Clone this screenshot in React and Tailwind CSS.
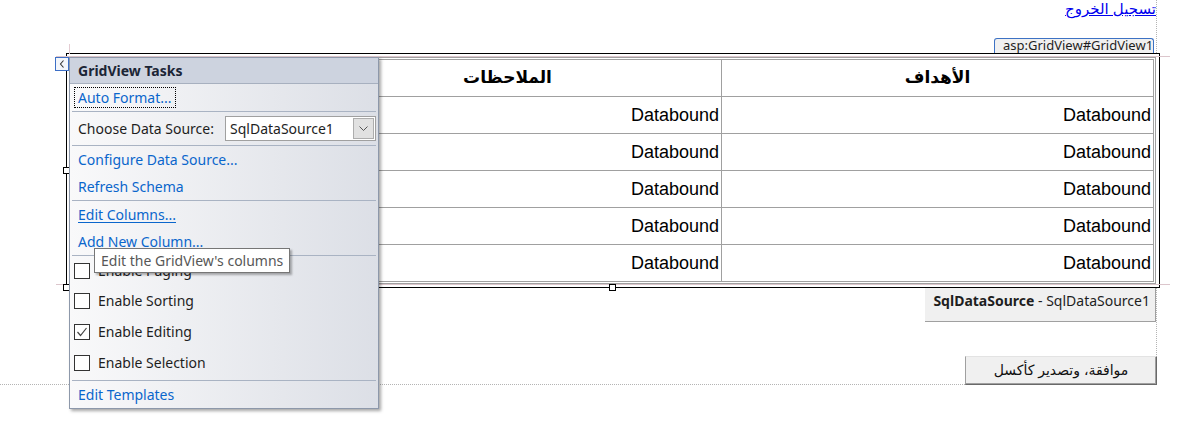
import React from "react";

const ui = "font-['Noto_Sans',sans-serif]";
const arial = "font-['Liberation_Sans','DejaVu_Sans',sans-serif]";

const Sep = () => <div className="mx-[2px] h-px shrink-0 bg-[#a9b3c3]" />;

const CheckRow = ({ label, checked, h = "h-[31px]" }) => (
  <div className={`${h} shrink-0 flex items-center pl-[4px] gap-[8px]`}>
    <div className="w-[16px] h-[16px] border border-[#333] bg-white flex items-center justify-center">
      {checked && (
        <svg width="12" height="12" viewBox="0 0 12 12">
          <polyline points="1.5,6 4.5,9.5 10.5,2" fill="none" stroke="#444" strokeWidth="1.2" />
        </svg>
      )}
    </div>
    <span className="text-[#1e1e1e]">{label}</span>
  </div>
);

const LinkRow = ({ label, underline }) => (
  <div className="h-[27px] shrink-0 flex items-center pl-[8px]">
    <span className={`text-[#0a66cc] ${underline ? "underline underline-offset-2" : ""}`}>{label}</span>
  </div>
);

const rows = [1, 2, 3, 4, 5];

const App = () => {
  return (
    <div className={`relative w-[1190px] h-[441px] overflow-hidden bg-white ${ui}`}>
      <div className="w-[1157px] h-[385px] border-r border-b border-dotted border-[#b4b4b4] flex flex-col">
        {/* logout */}
        <div className="h-[18px] shrink-0 flex justify-end">
          <a dir="rtl" className={`text-[15px] leading-[18px] text-[#0000ee] underline ${arial}`}>
            تسجيل الخروج
          </a>
        </div>

        {/* control badge */}
        <div className="mt-[20px] mr-[2px] self-end w-[160px] h-[15px] shrink-0 rounded-t-[3px] border border-b-0 border-[#3d72c4] bg-[#f0f0f0] text-[13px] leading-[13px] text-[#1e1e1e] pl-[8px]">
          asp:GridView#GridView1
        </div>

        {/* grid view */}
        <div className="ml-[66px] w-[1094px] h-[235px] shrink-0 border border-black bg-white p-[3px]">
          <div className="h-full border border-[#a0a0a0] p-px">
            <div className={`border-t border-l border-r border-[#a0a0a0] ${arial} text-black`}>
              <div className="flex h-[37px] border-b border-[#a0a0a0]">
                <div className="w-[221px] border-r border-[#a0a0a0]" />
                <div dir="rtl" className="w-[428px] border-r border-[#a0a0a0] flex items-center justify-center font-bold text-[17px]">
                  الملاحظات
                </div>
                <div dir="rtl" className="flex-1 flex items-center justify-center font-bold text-[17px]">
                  الأهداف
                </div>
              </div>
              {rows.map((r) => (
                <div key={r} className="flex h-[37px] border-b border-[#a0a0a0] text-[18px]">
                  <div className="w-[221px] border-r border-[#a0a0a0] flex items-center justify-end pr-[2px]">Databound</div>
                  <div className="w-[428px] border-r border-[#a0a0a0] flex items-center justify-end pr-[2px]">Databound</div>
                  <div className="flex-1 flex items-center justify-end pr-[2px]">Databound</div>
                </div>
              ))}
            </div>
          </div>
        </div>

        {/* data source control */}
        <div className="self-end w-[231px] h-[34px] shrink-0 border-r border-b border-[#a0a0a0] bg-[#f0f0f0] flex items-center justify-end pr-[5px] pb-[8px] text-[14px] text-[#1e1e1e] whitespace-nowrap">
          <span className="font-bold">SqlDataSource</span>
          <span>&nbsp;- SqlDataSource1</span>
        </div>

        {/* export button */}
        <div
          dir="rtl"
          className={`self-end -mr-px mt-[34px] w-[192px] h-[29px] shrink-0 border border-t-[#e3e3e3] border-r-[#696969] border-b-[#696969] border-l-[#a0a0a0] shadow-[inset_-1px_-1px_0_#a0a0a0] bg-[#f0f0f0] flex items-center justify-center text-[14px] text-[#111] ${arial}`}
        >
          موافقة، وتصدير كأكسل
        </div>
      </div>

      {/* designer guide lines */}
      <div className="absolute left-[56px] top-[56px] w-[1114px] h-px bg-[#dcc6cc]" />
      <div className="absolute left-[56px] top-[284px] w-[1114px] h-px bg-[#dcc6cc]" />
      <div className="absolute left-[69px] top-[44px] w-px h-[10px] bg-[#e4ccd2]" />

      {/* selection handles */}
      <div className="absolute left-[63px] top-[167px] w-[7px] h-[7px] border border-black bg-white" />
      <div className="absolute left-[63px] top-[284px] w-[7px] h-[7px] border border-black bg-white" />
      <div className="absolute left-[609px] top-[284px] w-[7px] h-[7px] border border-black bg-white" />

      {/* smart tag panel */}
      <div className="absolute left-[69px] top-[57px] w-[310px] h-[352px] border border-[#8d98aa] bg-[linear-gradient(to_right,#f9f9fa,#dcdfe6)] shadow-[2px_2px_3px_rgba(0,0,0,0.35)] flex flex-col text-[14px]">
        <div className="h-[26px] shrink-0 border-b border-[#a7b0bf] bg-[#cdd3df] flex items-center pl-[8px] font-bold text-[#1b2536]">
          GridView Tasks
        </div>
        <div className="h-[27px] shrink-0 flex items-center pl-[4px]">
          <span className="h-[21px] border border-dotted border-black px-[3px] flex items-center text-[#0a66cc]">
            Auto Format...
          </span>
        </div>
        <Sep />
        <div className="h-[33px] shrink-0 flex items-center pl-[8px]">
          <span className="w-[147px] text-[#1e1e1e]">Choose Data Source:</span>
          <div className="w-[151px] h-[25px] border border-[#a0a0a0] bg-white flex items-center justify-between pl-[4px] pr-px">
            <span className="text-[#1e1e1e]">SqlDataSource1</span>
            <div className="w-[21px] h-[21px] bg-[#e1e1e1] border border-[#adadad] flex items-center justify-center">
              <svg width="9" height="6" viewBox="0 0 9 6">
                <polyline points="0.5,0.5 4.5,4.5 8.5,0.5" fill="none" stroke="#555" strokeWidth="1" />
              </svg>
            </div>
          </div>
        </div>
        <Sep />
        <LinkRow label="Configure Data Source..." />
        <LinkRow label="Refresh Schema" />
        <Sep />
        <LinkRow label="Edit Columns..." underline />
        <LinkRow label="Add New Column..." />
        <Sep />
        <CheckRow label="Enable Paging" h="h-[29px]" />
        <CheckRow label="Enable Sorting" />
        <CheckRow label="Enable Editing" checked />
        <CheckRow label="Enable Selection" />
        <div className="h-[2px] shrink-0" />
        <Sep />
        <LinkRow label="Edit Templates" />
      </div>

      {/* collapse button */}
      <div className="absolute left-[55px] top-[57px] w-[14px] h-[14px] border border-[#3d6fc6] bg-[#f3f6fb] flex items-center justify-center">
        <svg width="6" height="8" viewBox="0 0 6 8">
          <polyline points="4.5,0.5 1.5,4 4.5,7.5" fill="none" stroke="#333" strokeWidth="1.1" />
        </svg>
      </div>

      {/* tooltip */}
      <div className="absolute left-[94px] top-[248px] w-[196px] h-[25px] border border-[#767676] bg-white shadow-[2px_2px_2px_rgba(0,0,0,0.3)] flex items-center pl-[6px] text-[14px] text-[#575757]">
        Edit the GridView's columns
      </div>
    </div>
  );
};

export default App;
